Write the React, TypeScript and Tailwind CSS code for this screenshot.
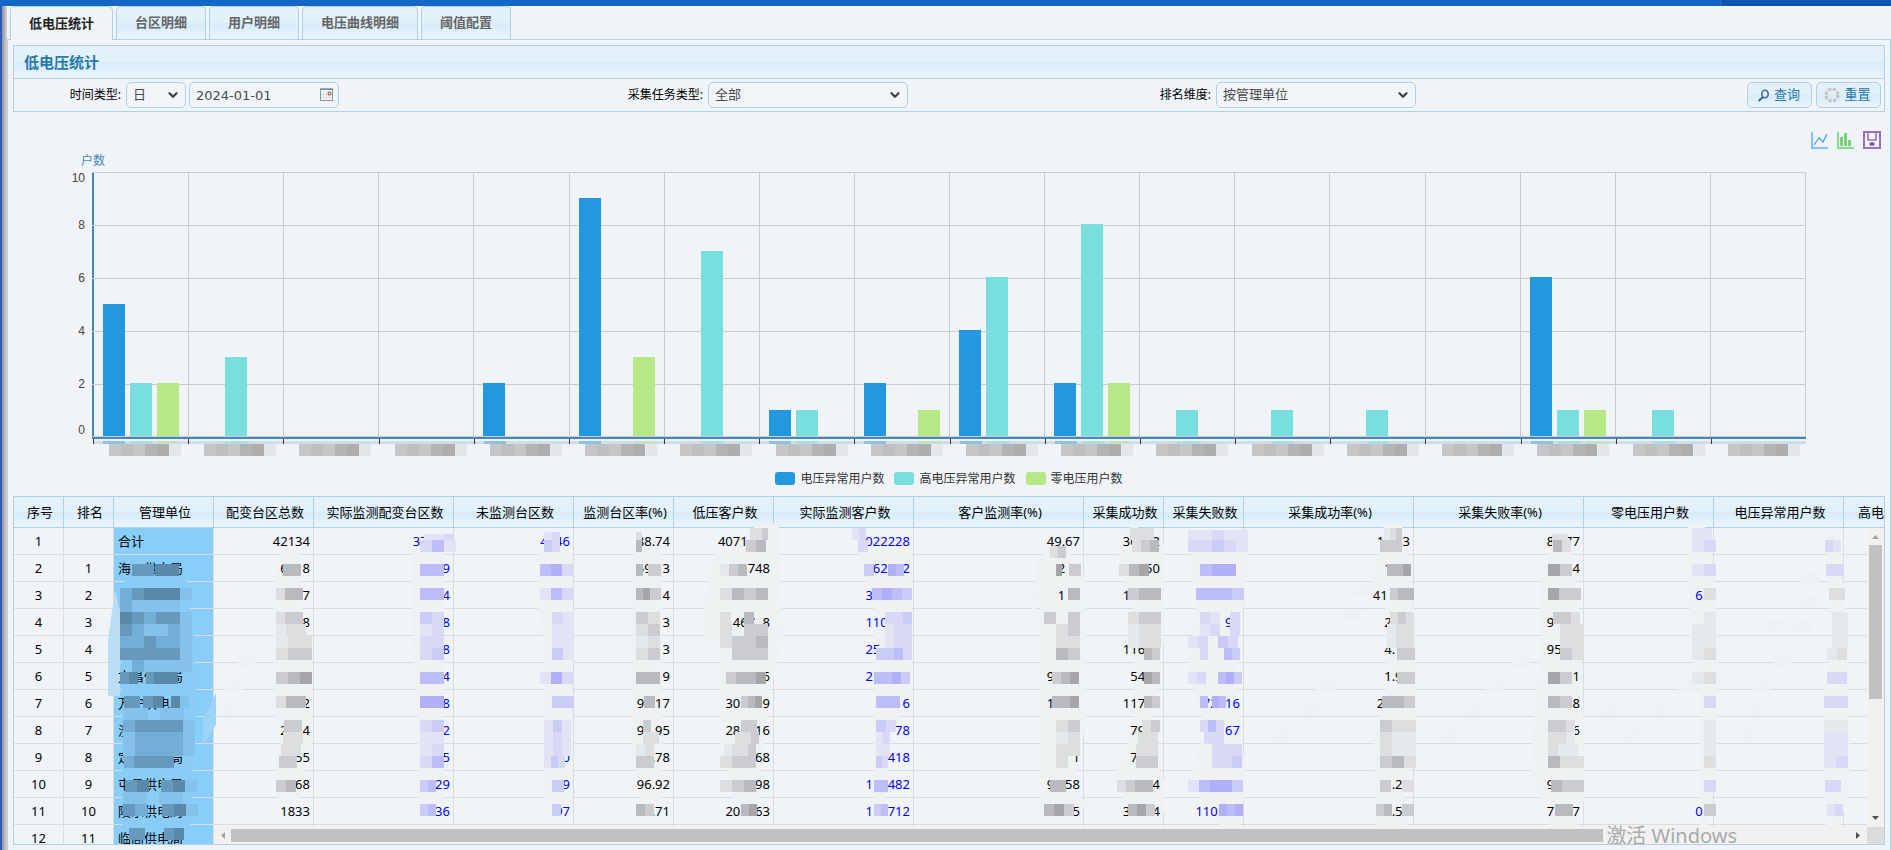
import { ChevronDown } from "lucide-react";

const tabs = ["低电压统计", "台区明细", "用户明细", "电压曲线明细", "阈值配置"];

const series = [
  { name: "电压异常用户数", color: "bg-[#2398df]" },
  { name: "高电压异常用户数", color: "bg-[#78dede]" },
  { name: "零电压用户数", color: "bg-[#b6e886]" },
];

const chartData = [
  [5, 2, 2], [0, 3, 0], [0, 0, 0], [0, 0, 0], [2, 0, 0], [9, 0, 3],
  [0, 7, 0], [1, 1, 0], [2, 0, 1], [4, 6, 0], [2, 8, 2], [0, 1, 0],
  [0, 1, 0], [0, 1, 0], [0, 0, 0], [6, 1, 1], [0, 1, 0], [0, 0, 0],
];

const labelCells = ["bg-[#c4c6c7]", "bg-[#bdbfc0]", "bg-[#c5c6c8]", "bg-[#b3b4b6]", "bg-[#adaeb0]", "bg-[#e3e7ea]"];

const columns = [
  { title: "序号", width: 50 },
  { title: "排名", width: 50 },
  { title: "管理单位", width: 100 },
  { title: "配变台区总数", width: 100 },
  { title: "实际监测配变台区数", width: 140, link: true },
  { title: "未监测台区数", width: 120, link: true },
  { title: "监测台区率(%)", width: 100 },
  { title: "低压客户数", width: 100 },
  { title: "实际监测客户数", width: 140, link: true },
  { title: "客户监测率(%)", width: 170 },
  { title: "采集成功数", width: 80 },
  { title: "采集失败数", width: 80, link: true },
  { title: "采集成功率(%)", width: 170 },
  { title: "采集失败率(%)", width: 170 },
  { title: "零电压用户数", width: 130, link: true },
  { title: "电压异常用户数", width: 130, link: true },
  { title: "高电压异常用户数", width: 130, link: true },
];

// "_" stands for a masked digit
const rows = [
  ["合计", "42134", "37___", "4_46", "88.74", "4071___", "_022228", "49.67", "36__2", "", "1_._3", "8_.77"],
  ["海口供电局", "6__8", "__9", "", "59._3", "___748", "_62__2", "_2__", "___50", "1____", "10._", "__._4"],
  ["", "___7", "__4", "", "__._4", "___2_", "3_____", "_1__", "1____", "", "41___", "____", "6_"],
  ["", "___8", "__8", "", "__._3", "_467_8", "110___", "", "", "_9_", "2.__", "9_.__"],
  ["", "", "__8", "", "__._3", "", "25____", "", "116__", "_6_", "4.__", "95.__"],
  ["文昌供电局", "", "__4", "", "__._9", "_____6", "2_____", "9_.__", "54__", "_9__", "1.9_", "__._1"],
  ["万宁供电局", "___2", "__8", "", "9_.17", "30___9", "_____6", "1_.__", "117__", "_72_16", "2_.__", "__._8"],
  ["澄", "2__4", "__2", "", "9_.95", "28__16", "____78", "", "79__", "___67", "", "__._6"],
  ["定安供电局", "__55", "__5", "_0", "7_.78", "____68", "___418", "_._1", "7___", "", "", ""],
  ["屯昌供电局", "__68", "_29", "_9", "96.92", "____98", "1__482", "9_.58", "___4", "", "_.27", "9_.__"],
  ["陵水供电局", "1833", "_36", "97", "__.71", "20__63", "1__712", "_8.15", "3___4", "110___", "_.5_", "7_._7", "0_"],
  ["临高供电局"],
];

const shades: Record<string, string> = {
  "1": "#e6e9eb", "2": "#dcdee0", "3": "#cbccd0", "4": "#b9babd", "5": "#a5a6a9",
  a: "#e3e3f6", b: "#d8d8f7", c: "#cbcbf8", d: "#bdbdf9", e: "#b0aff8",
  p: "#84c1eb", q: "#74aed6", r: "#6599bd", s: "#5989a9",
};

// x, y, one shade per block, block width
type Run = [number, number, string, number?];

const masks: Run[] = [
  // unit names
  [132, 564, "rr", 11], [155, 564, "sss", 8],
  [120, 588, "qrsssp"], [120, 600, "qpppp"], [120, 612, "srqrrp"], [120, 624, "rqppqp"], [120, 636, "qqrqqp"], [120, 648, "rrrrrp"],
  [120, 672, "rs", 9], [146, 672, "rsss", 8], [120, 660, ".qpppp"],
  [124, 696, "rr", 8], [143, 696, "rs", 10], [171, 696, "sp", 9], [124, 708, "pp.pp"],
  [123, 720, "qrrrrp"], [123, 732, "pqqqqp"], [123, 744, "pqqqqp"], [124, 756, "qrrrr", 10],
  [125, 780, "rs"], [161, 780, "rsp"], [123, 792, "pp.pp"], [123, 804, "rq"], [162, 804, "rsp"],
  [129, 828, "rr", 8], [164, 828, "rs", 10],
  // 配变台区总数
  [283, 564, "44", 9], [276, 588, "244", 9], [276, 612, "233", 9], [276, 624, "122", 10], [276, 636, "122"],
  [276, 648, "233"], [276, 672, "345"], [276, 696, "244", 10], [284, 720, "33", 9], [283, 732, "22", 10],
  [281, 744, "22", 10], [279, 756, "33", 9], [276, 780, "34", 10],
  // 实际监测配变台区数
  [424, 534, "aab", 10], [420, 540, "bda"], [420, 564, "dd"], [420, 588, "dd"], [420, 612, "cb"], [420, 624, "ab"],
  [420, 636, "bb"], [420, 648, "bc"], [420, 672, "dd"], [420, 696, "ee"], [420, 720, "bc"], [420, 732, "aa"],
  [420, 744, "ab"], [420, 756, "bd"], [420, 780, "cd", 8], [420, 804, "cd", 8],
  // 未监测台区数
  [544, 532, "ab", 8], [544, 540, "cb", 8], [540, 564, "deb", 11], [540, 588, "adb", 11], [552, 612, "ba", 11], [552, 624, "aa", 11],
  [552, 636, "aa", 11], [552, 648, "ca", 11], [540, 672, "aeb", 11], [552, 696, "cc", 11], [544, 720, "aca", 9], [544, 732, "aba", 9],
  [544, 744, "aba", 9], [544, 756, "acb", 7], [552, 780, "c"], [552, 804, "c", 9],
  // 监测台区率
  [636, 532, "2", 6], [636, 540, "4", 6], [636, 564, "4", 7], [648, 564, "3", 13], [636, 588, "45", 7], [650, 588, "3", 11],
  [636, 612, "32"], [636, 624, "23"], [636, 636, "12"], [636, 648, "23"], [636, 672, "44", 12], [644, 696, "4", 11],
  [643, 720, "3", 8], [643, 732, "22", 8], [636, 744, "12", 9], [636, 756, "33", 9], [636, 804, "43", 9],
  // 低压客户数
  [750, 528, "223", 6], [746, 540, "34", 10], [720, 564, "134", 9], [720, 588, "2434", 12], [720, 612, "2", 11],
  [744, 612, "4", 10], [720, 624, "2.33"], [720, 636, "2334"], [732, 648, "333"], [726, 672, "3445", 10],
  [741, 696, "345", 7], [741, 720, "33", 8], [735, 732, "223", 8], [724, 744, "1223", 8], [720, 756, "233"],
  [720, 780, "234"], [741, 804, "45", 8],
  // 实际监测客户数
  [852, 528, "ab", 7], [858, 540, "b", 10], [864, 564, "c", 10], [888, 564, "ed", 8], [872, 588, "dedc", 10],
  [885, 612, "bbc", 9], [885, 624, "abb", 9], [885, 636, "abb", 9], [876, 648, "ccdb", 9], [874, 672, "ddec", 9],
  [876, 696, "dd"], [876, 720, "cb", 10], [876, 732, "ab", 7], [876, 744, "aa", 7], [876, 756, "cb", 6],
  [874, 780, "dd", 7], [874, 804, "cd", 7],
  // 客户监测率
  [1050, 546, "23", 8], [1056, 564, "5", 6], [1069, 564, "3"], [1056, 588, ".4"], [1044, 612, "3.3"], [1056, 624, "23"],
  [1056, 636, "22"], [1056, 648, "43"], [1052, 672, "345", 9], [1052, 696, "445", 9], [1056, 720, "23"],
  [1056, 732, "12"], [1056, 744, "22"], [1056, 756, "2"], [1050, 780, "44", 8], [1044, 804, "453", 10],
  // 采集成功数
  [1130, 528, "222", 8], [1132, 540, "234", 9], [1119, 564, "245", 10], [1128, 588, "344", 11], [1128, 612, "233", 11],
  [1128, 624, "122", 11], [1128, 636, "122", 11], [1144, 648, "43", 8], [1144, 672, "54", 8], [1144, 696, "43", 8],
  [1142, 720, "23", 9], [1138, 732, "22", 10], [1136, 744, "22", 11], [1136, 756, "33", 11], [1117, 780, "2344", 9],
  [1128, 804, "453", 9],
  // 采集失败数
  [1188, 530, "aabaa"], [1188, 540, "bbcba"], [1200, 564, "dee"], [1196, 588, "dddc"], [1200, 612, "ba.b", 10],
  [1200, 624, "ab.b", 10], [1188, 636, "ab.cb", 10], [1200, 648, "b..dc", 8], [1188, 672, "ab", 9], [1218, 672, "dec", 8],
  [1200, 696, "d", 8], [1212, 696, "ed", 7], [1200, 720, "bdb", 8], [1204, 732, "bb", 10], [1212, 744, "bbb", 10],
  [1212, 756, "bbc", 10], [1188, 780, "adeec", 11], [1219, 804, "ede", 8],
  // 采集成功率
  [1384, 528, "123", 6], [1380, 540, "33", 11], [1387, 564, "445", 8], [1390, 588, "344", 8], [1390, 612, "232", 8],
  [1387, 624, "122", 9], [1387, 636, "122", 9], [1397, 648, "33", 9], [1397, 672, "33", 9], [1382, 696, "443", 11],
  [1380, 720, "322"], [1380, 732, "211"], [1380, 744, "211"], [1380, 756, "342"], [1380, 780, "3.2", 11], [1376, 804, "34", 8], [1402, 804, "3"],
  // 采集失败率
  [1552, 534, "22", 8], [1553, 540, "42", 9], [1548, 564, "53"], [1548, 588, "533", 11], [1553, 612, "332", 9], [1560, 624, "22"],
  [1560, 636, "22"], [1560, 648, "32"], [1548, 672, "53"], [1548, 696, "43"], [1548, 720, "332", 9],
  [1548, 732, "221", 9], [1548, 744, "211", 10], [1548, 756, "422"], [1551, 780, "433", 11], [1555, 804, "44", 9],
  // 零电压用户数
  [1692, 528, "aa", 10], [1692, 540, "ab"], [1692, 564, "ab"], [1704, 588, "2"], [1692, 612, ".1"], [1692, 624, "11"],
  [1692, 636, "11"], [1692, 648, "12"], [1692, 672, "12"], [1704, 696, "b"], [1704, 720, "1"], [1704, 732, "1"],
  [1704, 744, "1"], [1704, 756, "2"], [1704, 780, "b"], [1704, 804, "3"],
  // 电压异常用户数
  [1825, 540, "ba", 8], [1826, 564, "bb", 9], [1829, 588, "22", 8], [1832, 612, "11", 8], [1832, 624, "11", 8], [1832, 636, "11", 8],
  [1827, 648, "12", 10], [1827, 672, "bb", 10], [1824, 696, "bb"], [1824, 720, "11"], [1824, 732, "aa"], [1824, 744, "aa"],
  [1824, 756, "ab"], [1825, 780, "bb", 8], [1827, 804, "ab", 8],
];

// faint strokes that run down the masked columns
const strokes = [
  "M282 552H300V574L306 660H312V740L300 798H278L276 760L284 718H274V575Z",
  "M412 552H444V806H418V725L411 600Z",
  "M538 552H573V806H545V640L538 610Z",
  "M634 545H662V800H640L632 740Z",
  "M740 545L756 524H779L783 640L770 690L757 815H738L720 740V640H704V600L716 552Z",
  "M852 530L866 532L878 552H912V690L890 740L884 815H874V600L866 580Z",
  "M1052 545H1066L1086 580V720L1074 790L1090 806L1040 820V600L1030 620L1038 560Z",
  "M1120 530L1136 526L1164 545V640L1150 740L1164 780V812L1128 815L1116 770L1134 730V590L1118 575Z",
  "M1188 532H1248V562L1240 640L1236 680L1246 780L1240 826H1220L1188 780L1206 730L1188 670L1196 600Z",
  "M1384 524H1402L1412 590L1417 640L1416 745L1404 800L1408 830H1376L1374 740L1386 690V590L1367 600L1378 556Z",
  "M1552 534H1568L1578 600L1584 720V800L1575 830H1552L1530 770L1540 650V590Z",
  "M1688 524H1704L1712 550L1718 650L1716 780L1706 826H1700V700L1690 640Z",
  "M1826 536H1840L1848 640L1850 780L1840 828H1826L1824 690L1832 640Z",
];

const patches = [
  [234, 661], [223, 685], [215, 709], [1314, 685], [1298, 709], [1270, 733], [1350, 589], [1340, 613], [1508, 661], [1484, 685],
  [1462, 709], [1438, 733], [1676, 685], [1648, 709], [1598, 709], [1798, 577], [1796, 601], [1790, 625], [1760, 625],
  [1770, 661], [1750, 685], [1744, 709], [1736, 733], [1620, 733],
];

const barGradient = "bg-[linear-gradient(to_bottom,#e4f1fb_0%,#e1f1fa_50%,#d7ebf9_51%,#e9f5fd_100%)]";
const fieldClass = "h-[26px] rounded-[5px] border border-[#aed0ea] bg-[#f1f5f9] px-[6px] text-[13px] text-[#4a4a4a] outline-none";
const btnClass = `flex h-[26px] w-[65px] items-center justify-center gap-[4px] rounded-[5px] border border-[#aed0ea] pr-[2px] text-[13px] text-[#2779aa] ${barGradient}`;

function SelectBox({ id, value, className }: { id: string; value: string; className: string }) {
  return (
    <div className={`relative ${className}`}>
      <select id={id} defaultValue={value} className={`w-full appearance-none ${fieldClass}`}>
        <option>{value}</option>
      </select>
      <ChevronDown className="pointer-events-none absolute top-[6px] right-[6px] h-[14px] w-[14px] text-[#444]" strokeWidth={4} />
    </div>
  );
}

function CalendarIcon() {
  return (
    <svg width="13" height="13" viewBox="0 0 13 13" className="pointer-events-none absolute top-[6px] right-[6px]">
      <rect x="0.5" y="1" width="12" height="11.5" fill="#f8f8f8" stroke="#7d97bb" />
      <path d="M0 0.500h13v1.500H0z" fill="#6d8db8" />
      <path d="M3.500 3v9M6.500 3v9M9.500 8v4M1 6.500h6M1 9.500h11" stroke="#e0dada" />
      <circle cx="9.5" cy="5.5" r="1.5" fill="#fff" stroke="#7a1515" />
    </svg>
  );
}

function Chart() {
  return (
    <section className="shrink-0">
      <div className="flex justify-end gap-[9px] pt-[19px] pr-[4px]">
        <button type="button" aria-label="折线图">
          <svg width="17" height="18" viewBox="0 0 17 18" fill="none">
            <path d="M1 1V17H17" stroke="#84c0fb" strokeWidth="2" />
            <path d="M3 14L8 7L12 11L16 3" stroke="#3b9bf5" strokeWidth="1.2" />
          </svg>
        </button>
        <button type="button" aria-label="柱状图">
          <svg width="17" height="18" viewBox="0 0 17 18" fill="none">
            <path d="M1 1V17H17" stroke="#86dc86" strokeWidth="2" />
            <path d="M4.500 15V6M8.500 15V2M12.500 15V9" stroke="#66cc66" strokeWidth="2.6" />
          </svg>
        </button>
        <button type="button" aria-label="保存为图片">
          <svg width="18" height="18" viewBox="0 0 18 18" fill="none" stroke="#9a70c0">
            <rect x="1" y="1" width="16" height="16" strokeWidth="2" />
            <path d="M5 1.500V9H13V1.500" strokeWidth="1.6" />
            <ellipse cx="9" cy="13" rx="2.4" ry="1.5" fill="#7a48a8" />
          </svg>
        </button>
      </div>
      <div className="mt-[4px] ml-[68px] h-[19px] text-[12px] leading-[16px] text-[#4488bb]">户数</div>
      <div className="relative mr-[79px] ml-[79px]">
        {[10, 8, 6, 4, 2, 0].map((n, i) => (
          <div key={n}>
            <span
              className="absolute right-full mr-[7px] font-['Liberation_Sans',sans-serif] text-[12px] leading-[12px] text-[#444]"
              style={{ top: i === 0 ? 0 : i === 5 ? 252 : i * 53 - 6 }}
            >
              {n}
            </span>
            <i className="absolute right-0 left-0 h-px bg-[#ccc]" style={{ top: i === 5 ? 264 : i * 53 }} />
          </div>
        ))}
        <div className="flex h-[267px] border-b-2 border-l-2 border-[#4488bb]">
          {chartData.map((group, i) => (
            <div key={i} className="relative flex flex-1 items-end justify-center gap-[5px] border-r border-[#ccc] pb-px">
              {group.map((v, j) => (
                <div key={j} className={`w-[22px] ${series[j].color}`} style={{ height: (v * 53) / 2 }} />
              ))}
            </div>
          ))}
        </div>
        <div className="ml-px flex h-[5px]">
          {chartData.map((group, i) => (
            <div key={i} className="flex flex-1 flex-col justify-end border-l border-[#333]">
              <div className="flex h-[3px] justify-center gap-[5px] bg-[#d0dde6]">
                {group.map((v, j) => (
                  <div key={j} className={`w-[22px] opacity-40 ${v ? series[j].color : ""}`} />
                ))}
              </div>
            </div>
          ))}
        </div>
        <div className="flex h-[12px]">
          {chartData.map((_, i) => (
            <div key={i} className="flex flex-1 pl-[17px]">
              {labelCells.map((c, j) => (
                <i key={j} className={`w-[12px] ${c}`} />
              ))}
            </div>
          ))}
        </div>
      </div>
      <div className="flex items-center justify-center gap-[10px] pt-[16px] pb-[11px] text-[12px] leading-[13px] text-[#333]">
        {series.map((s) => (
          <div key={s.name} className="flex items-center gap-[5px]">
            <i className={`h-[13px] w-[20px] rounded-[3px] ${s.color}`} />
            {s.name}
          </div>
        ))}
      </div>
    </section>
  );
}

function StrokeLayer() {
  return (
    <svg width="1960" height="348" className="pointer-events-none absolute top-0 left-0 z-10">
      <g transform="translate(-14 -497)">
        <path d="M115 590L120 612V696H108V640Z" fill="#b9def4" />
        <path d="M216 693V725L203 745V720Z" fill="#9dd3f6" />
        <path d="M132 564L139 558L186 575L194 640L196 700L190 830H122V588Z" fill="#8bccf7" />
        {strokes.map((d, i) => (
          <path key={i} d={d} fill="#eef2f3" />
        ))}
        {patches.map(([x, y], i) => (
          <path key={i} d={`M${x + 7} ${y - 4}h18l-6 11h-19z`} fill="#eef2f4" />
        ))}
      </g>
    </svg>
  );
}

function MaskLayer() {
  return (
    <svg width="1960" height="348" className="pointer-events-none absolute top-0 left-0 z-30" shapeRendering="crispEdges">
      <g transform="translate(-14 -497)">
        {masks.map(([x, y, keys, w = 12], i) =>
          keys.split("").map((k, j) =>
            k === "." ? null : <rect key={`${i}-${j}`} x={x + j * w} y={y} width={w} height={12} fill={shades[k]} />
          )
        )}
      </g>
    </svg>
  );
}

function DataTable() {
  return (
    <div className="relative mb-[5px] min-h-0 flex-1 overflow-hidden border border-[#aed0ea]">
      <table className="w-[1960px] table-fixed border-separate border-spacing-0 text-[13px] leading-[18px] text-black">
        <colgroup>
          {columns.map((c) => (
            <col key={c.title} style={{ width: c.width }} />
          ))}
        </colgroup>
        <thead>
          <tr className="h-[31px]">
            {columns.map((c) => (
              <th key={c.title} className={`border-r border-b border-[#aed0ea] p-0 pl-[3px] font-normal whitespace-nowrap ${barGradient}`}>
                {c.title}
              </th>
            ))}
          </tr>
        </thead>
        <tbody>
          {rows.map(([unit, ...values], i) => (
            <tr key={i} className="h-[27px]">
              <td className="border-r border-b border-[#dcdcdc] p-0 text-center">{i + 1}</td>
              <td className="border-r border-b border-[#dcdcdc] p-0 text-center">{i > 0 && i}</td>
              <td className="border-r border-b border-[#dcdcdc] bg-[#87cefa] p-0 pl-[4px] whitespace-nowrap">
                <span className="relative z-20">{unit}</span>
              </td>
              {columns.slice(3).map((c, j) => {
                const text = (values[j] ?? "").replace(/_/g, "\u2007");
                return (
                  <td key={c.title} className="border-r border-b border-[#dcdcdc] p-0 pr-[3px] text-right whitespace-pre">
                    {c.link && text ? (
                      <a href="#" className="relative z-20 text-[#0000ff]">{text}</a>
                    ) : (
                      <span className="relative z-20">{text}</span>
                    )}
                  </td>
                );
              })}
            </tr>
          ))}
        </tbody>
      </table>

      <StrokeLayer />
      <MaskLayer />

      {/* scrollbars */}
      <div className="absolute top-[31px] right-0 bottom-[17px] z-40 flex w-[17px] flex-col items-center bg-[#f1f1f1]">
        <svg width="17" height="17"><path d="M5 11L8.500 7L12 11Z" fill="#a3a3a3" /></svg>
        <div className="h-[154px] w-[13px] bg-[#c1c1c1]" />
        <svg width="17" height="17" className="mt-auto"><path d="M5 6L8.500 10L12 6Z" fill="#505050" /></svg>
      </div>
      <div className="absolute right-[17px] bottom-0 left-[200px] z-40 flex h-[17px] items-center bg-[#f1f1f1]">
        <svg width="17" height="17"><path d="M11 5L7 8.500L11 12Z" fill="#a3a3a3" /></svg>
        <div className="h-[13px] w-[83%] bg-[#c1c1c1]" />
        <svg width="17" height="17" className="ml-auto"><path d="M6 5L10 8.500L6 12Z" fill="#505050" /></svg>
      </div>
      <div className="absolute right-0 bottom-0 z-40 h-[17px] w-[17px] bg-[#dcdcdc]" />
    </div>
  );
}

export default function App() {
  return (
    <div className="relative flex h-screen flex-col overflow-hidden bg-[#f0f4f8] font-['Noto_Sans','Noto_Sans_CJK_SC',sans-serif]">
      <div className="flex h-[6px] shrink-0 bg-[#1167c3]">
        <div className="ml-auto w-[169px] bg-[#0e55ad]" />
      </div>
      <div className="flex min-h-0 flex-1">
        <div className="w-[7px] shrink-0 bg-[linear-gradient(to_right,#2b5bb5_0,#2b5bb5_2px,#8d939f_2px,#a9a9ad_4px,#d8d8dc_7px)]" />
        <div className="flex min-w-0 flex-1 flex-col">
          <nav className="flex h-[34px] shrink-0 gap-[3px] border-b border-[#aed0ea] pl-[3px]">
            {tabs.map((t, i) => (
              <button
                key={t}
                type="button"
                className={`rounded-t-[5px] border border-[#aed0ea] px-[18px] text-[13px] font-bold whitespace-nowrap ${
                  i === 0 ? "-mb-px border-b-0 bg-[#f0f4f8] text-[#222]" : `border-b-0 text-[#666] ${barGradient}`
                }`}
              >
                {t}
              </button>
            ))}
          </nav>
          <main className="flex min-h-0 flex-1 flex-col border-x border-[#aed0ea] px-[5px] pt-[5px]">
            <section className="shrink-0 border border-[#aed0ea]">
              <h2 className={`h-[33px] border-b border-[#aed0ea] pl-[10px] text-[15px] leading-[32px] font-bold text-[#2779aa] ${barGradient}`}>
                低电压统计
              </h2>
              <form className="grid grid-cols-[110fr_462fr_120fr_388fr_120fr_670fr] items-center py-[3px] text-[12px] text-black">
                <label htmlFor="timeType" className="pr-[3px] text-right">时间类型:</label>
                <div className="flex gap-[3px] pl-[2px]">
                  <SelectBox id="timeType" value="日" className="w-[60px]" />
                  <div className="relative w-[150px]">
                    <input
                      type="text"
                      aria-label="日期"
                      defaultValue="2024-01-01"
                      className={`w-full font-['DejaVu_Sans',sans-serif] ${fieldClass}`}
                    />
                    <CalendarIcon />
                  </div>
                </div>
                <label htmlFor="taskType" className="pr-[3px] text-right">采集任务类型:</label>
                <div className="pl-[2px]">
                  <SelectBox id="taskType" value="全部" className="w-[200px]" />
                </div>
                <label htmlFor="rankBy" className="pr-[3px] text-right">排名维度:</label>
                <div className="flex justify-between pr-[3px] pl-[2px]">
                  <SelectBox id="rankBy" value="按管理单位" className="w-[200px]" />
                  <div className="flex gap-[4px]">
                    <button type="button" className={btnClass}>
                      <svg width="13" height="13" viewBox="0 0 13 13" fill="none" stroke="#3a68a8">
                        <ellipse cx="8" cy="5" rx="3.2" ry="3.7" strokeWidth="1.6" />
                        <path d="M6 8L1.500 12" strokeWidth="2" />
                      </svg>
                      查询
                    </button>
                    <button type="button" className={btnClass}>
                      <svg width="16" height="16" viewBox="0 0 16 16">
                        <circle cx="8" cy="8" r="6" fill="none" stroke="#c4c4c4" strokeWidth="3.2" strokeDasharray="3.3 1.412" />
                      </svg>
                      重置
                    </button>
                  </div>
                </div>
              </form>
            </section>
            <Chart />
            <DataTable />
          </main>
        </div>
      </div>
      <div className="pointer-events-none absolute right-[154px] bottom-0 z-50 text-[20px] leading-[28px] text-[#a8aaac]">激活 Windows</div>
    </div>
  );
}
